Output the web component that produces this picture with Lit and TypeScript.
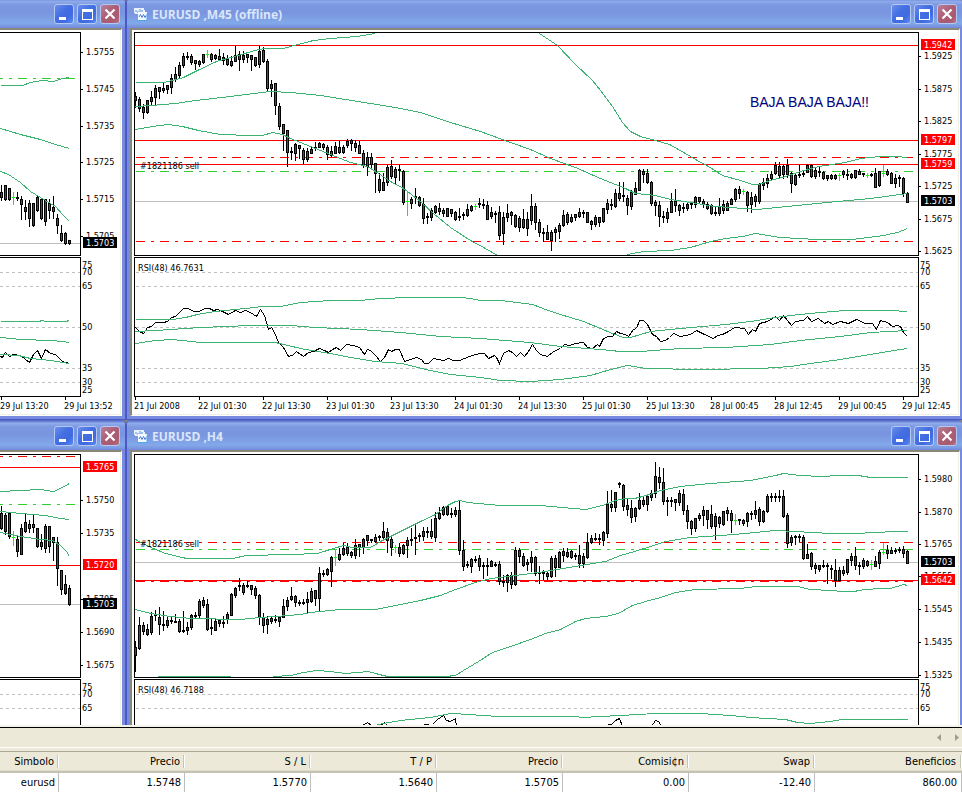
import { LitElement, html, svg, css, nothing } from "lit";
import { customElement, property } from "lit/decorators.js";

type Level = { y: number; kind: "solid" | "dash-red" | "dash-green" | "bid" };
type AxisLabel = { y: number; text: string; tag?: "red" | "black" };
type Note = { text: string; kind: "order" | "comment" };
interface Chart {
  title: string;
  edge: "cut" | "full";
  x: number;
  width: number;
  top: number;
  dashStart: number;
  dashEnd: number;
  candles: string;
  bands: string[];
  levels: Level[];
  prices: AxisLabel[];
  rsiTitle: string;
  rsiBands: string[];
  rsi: string[];
  times: string[];
  notes: Note[];
}

/* Candles: "high bodyTop bodyBottom low" and r(ed) / g(reen); "high middle low l" is a flat lime bar. */
const M45_CANDLES =
  "92 96 100 107 r/97 99 108 111 r/104 107 112 118 r/100 100 112 113 g/91 97 101 105 g/85 88 97 104 g/87 87 91 98 r/83 88 90 92 r/85 85 89 93 g/74 78 87 93 g/" +
  "67 74 79 81 r/62 65 75 77 g/53 56 65 67 g/52 56 58 59/54 56 62 64 r/60 60 63 69 r/60 61 64 66 g/54 54 62 63 g/50 54 57 l/53 54 59 61 r/" +
  "54 55 58 59 g/49 56 59 59 r/53 57 60 64 r/55 59 64 65 r/56 61 65 66 g/46 55 61 61 g/51 54 59 70 r/51 55 59 62 g/54 54 57 62 r/55 55 59 70 r/" +
  "57 57 65 66 r/46 51 64 67 g/47 50 61 62 r/59 61 88 90 r/80 84 88 96 g/83 83 105 114 r/103 106 126 129 r/124 124 133 150 r/130 130 152 166 r/147 151 153 159/" +
  "143 144 153 160 g/145 145 148 158 r/148 150 159 163 r/148 151 159 161 g/147 149 153 153 g/142 147 149 150/142 143 147 147 g/143 144 147 149 r/145 147 154 159 r/146 151 155 156 g/" +
  "142 146 153 153 g/141 147 152 153 r/145 147 152 153 g/139 141 145 147 g/139 140 143 150 r/140 143 147 151 r/141 145 153 153 r/150 153 165 167 r/152 157 166 175 g/153 157 164 167 r/" +
  "163 163 173 192 r/173 179 190 192 r/173 182 190 190 g/165 167 182 185 g/160 166 176 178 r/167 169 177 183 g/165 169 171 180/170 171 202 204 r/191 201 215 l/197 199 203 208 g/" +
  "188 196 198 203/196 197 205 206 r/198 204 218 223 r/213 216 218 223/208 210 217 220 g/205 206 212 213 g/203 208 211 214 r/208 210 213 216 r/208 208 216 216 g/209 209 213 216 r/" +
  "211 212 219 220 r/208 216 218 220/212 214 216 219/204 209 215 216 g/205 206 210 211 g/204 206 209 l/198 203 206 207/199 204 205 208/201 205 219 219 r/207 212 216 218 g/" +
  "211 213 215 222/206 212 235 239 r/212 217 233 244 g/204 213 217 221 g/211 212 215 224 r/214 215 226 227 r/216 218 227 231 g/209 219 227 228 r/212 219 228 235 g/194 206 220 224 g/" +
  "203 206 222 229 r/219 222 232 236 r/228 232 234 241/225 232 239 239 r/230 232 240 250 g/227 229 232 241 g/223 225 231 238 g/210 215 225 226 g/212 214 222 224 r/214 217 221 222 g/" +
  "214 214 217 220 g/208 212 216 217 g/210 212 213 217/212 212 222 222 r/220 221 224 229 r/215 217 224 226 g/217 217 222 226 r/208 208 221 222 g/199 203 209 213 g/199 204 205 209/" +
  "189 193 206 207 g/182 193 198 200 r/182 195 197 201/195 198 205 214 r/190 192 206 209 g/182 188 194 194 g/169 170 190 190 g/169 171 174 182 r/169 173 182 183 r/181 182 203 205 r/" +
  "200 202 205 215 r/201 205 216 226 r/211 216 218 222/208 212 218 222 g/193 201 212 212 g/189 201 205 211 r/204 205 210 215 r/203 207 209 212/203 204 208 210 g/202 203 204 208/" +
  "196 197 204 207 g/197 197 201 202 r/199 201 204 207 r/202 204 208 209 r/204 205 213 214 r/207 212 213 215/198 206 213 215 g/200 204 210 213 r/201 203 210 210 g/198 199 204 204 g/" +
  "188 189 199 201 g/186 189 193 198 r/189 191 194 l/191 192 205 211 r/192 197 204 212 g/194 196 201 206 r/183 184 201 203 g/178 182 185 189 g/174 178 183 187 g/171 174 178 179 g/" +
  "162 165 173 174 g/162 166 175 177 r/165 166 174 178 g/159 165 174 177 r/172 173 183 192 r/173 175 184 185 g/165 174 176 177/171 173 175 176/164 165 172 172 g/164 165 176 177 r/" +
  "167 170 176 178 g/167 171 173 176/171 172 178 179 r/175 175 178 180 g/174 175 178 179 r/174 175 178 179 g/173 175 180 l/170 171 174 177 g/169 174 175 179/173 174 177 178 r/" +
  "170 170 177 178 g/169 171 174 174 r/173 173 175 176/173 175 177 l/173 174 175 176/168 173 187 187 r/171 171 185 186 g/165 173 176 l/169 171 174 175 r/172 173 183 183 r/" +
  "174 178 183 187 g/175 177 179 186/177 178 193 196 r/192 193 202 202 r";

const H4_CANDLES =
  "641 647 655 671 g/617 625 648 649 g/622 625 631 634 r/624 629 634 635 r/612 616 632 634 g/610 614 616 620/607 617 624 634 r/611 624 625 630/617 620 625 627 g/616 620 621 623/" +
  "614 621 622 622/619 621 631 632 r/611 630 631 632/622 627 630 634 g/614 615 627 629 g/612 615 616 617/599 601 615 617 g/597 600 605 607 r/599 604 629 630 r/619 627 629 634/" +
  "619 621 630 630 g/619 620 623 626 g/616 622 623 627/612 614 619 623 g/593 594 615 615 g/587 588 595 597 g/578 585 587 590/583 585 592 594 r/581 585 587 587/585 585 589 594 r/" +
  "586 588 595 598 r/594 595 617 624 r/613 617 625 632 r/616 619 624 633 g/616 618 621 623 g/615 619 621 622/616 617 621 626 g/599 606 617 617 g/597 600 606 610 g/587 596 599 600 r/" +
  "595 596 602 606 r/600 602 603 605/599 602 603 604/592 599 602 613 g/588 591 601 602 g/590 590 598 605 r/567 573 598 611 g/570 573 575 576/568 569 574 575 g/556 557 571 586 g/" +
  "549 557 565 l/548 554 559 560 g/543 548 554 555 g/543 547 553 555 r/551 552 555 557 r/539 545 555 558 g/544 544 547 556 r/538 539 547 553 g/535 535 540 545 g/539 539 541 542/" +
  "534 537 541 542 g/535 536 538 540/522 531 537 540 g/528 532 540 552 r/537 539 547 555 r/545 547 552 l/543 547 553 556 r/544 545 553 554 g/537 540 545 557 g/528 539 540 545/" +
  "525 537 539 554/533 535 537 541/527 531 536 540 g/527 531 532 537/519 531 536 538 r/512 518 537 541 g/507 513 518 519 g/506 507 514 515 g/506 506 514 515 r/508 513 514 517/" +
  "507 510 514 516 g/500 510 550 554 r/540 550 566 570 r/561 564 566 567/558 559 566 572 g/556 559 560 562/555 558 566 570 r/562 565 567 578/558 565 567 575/560 561 566 566 g/" +
  "562 564 565 566/561 564 581 584 r/575 581 582 586/574 575 582 591 g/572 575 584 588 r/547 550 584 585 g/548 550 556 562 r/553 556 565 566 r/559 562 564 570 g/551 557 562 571 g/" +
  "556 557 573 575 r/566 572 573 583/570 572 574 579/572 573 576 579 r/556 558 576 577 g/555 558 567 576 r/551 552 567 567 g/548 551 555 561 r/548 552 556 557 g/550 551 557 558 r/" +
  "553 555 557 559/545 555 563 567 r/553 556 563 567 g/533 542 557 558 g/535 538 542 543 g/533 538 539 540/534 538 540 544/531 532 540 545 g/491 504 533 537 g/490 504 507 511 r/" +
  "492 492 507 511 g/482 483 485 487/484 485 506 510 r/498 505 509 515 r/500 508 517 522 r/507 508 516 521 g/493 500 508 509 g/497 500 504 506 r/495 496 504 510 g/490 493 497 500 g/" +
  "462 476 493 497 g/467 477 482 488 r/468 482 501 504 r/497 500 501 515/497 500 501 506/499 499 502 510 r/490 493 502 505 g/489 494 510 514 r/505 510 521 528 r/520 521 528 534 r/" +
  "518 518 528 531 g/513 515 518 520 g/506 510 515 525 g/510 510 519 528 r/505 514 526 528 r/513 516 526 539 g/516 517 523 527 r/511 511 524 525 g/507 510 513 520 r/510 513 520 532 r/" +
  "514 520 524 l/519 519 521 524/519 520 523 525 r/512 513 521 526 g/511 513 514 519/501 510 514 518 g/507 509 521 525 r/510 511 521 522 g/494 496 511 512 g/493 496 497 501/" +
  "493 496 497 501/490 496 497 501/490 496 516 517 r/513 515 543 547 r/535 537 542 545 g/535 536 537 544/534 536 537 541/535 537 558 559 r/544 554 558 558 g/552 553 566 569 r/" +
  "563 565 568 573 r/565 565 569 571 g/560 565 566 567/563 565 567 583/565 568 570 578/559 570 580 586 r/567 570 580 581 g/566 570 573 575 r/559 559 572 574 g/553 556 560 565 g/" +
  "547 556 565 569 r/562 565 567 574/558 560 566 568 g/560 561 565 566 r/560 564 569 l/556 561 566 566 g/550 552 563 568 g/543 552 554 l/545 550 553 558 r/547 550 553 553 g/" +
  "548 550 552 553/547 549 551 552/546 549 553 557 r/550 551 563 563 r";

const CHARTS: Chart[] = [
  {
    title: "", edge: "cut", x: 0, width: 80, top: 33, dashStart: -6, dashEnd: 75,
    candles:
      "185 192 197 200 r/185 185 199 200 g/188 188 199 200 r/192 197 204 l/192 197 199 200/196 199 204 219 r/200 207 211 219 r/200 203 218 226 r/203 203 225 226 g/" +
      "195 197 210 211 g/199 199 218 219 r/199 199 221 225 g/199 203 210 218 r/196 207 211 218 r/214 218 225 233 r/225 233 240 241 r/232 233 243 244 r/240 240 243 244 r",
    bands: [
      "0,85 22,85 30,82 42,80 53,81 62,78 69,77",
      "0,128 20,134 40,139 55,144 69,148",
      "0,171 8,174 20,182 30,191 45,200 55,206 62,214 69,221",
    ],
    levels: [{ y: 78, kind: "dash-green" }, { y: 243, kind: "bid" }],
    prices: [
      { y: 52, text: "1.5755" }, { y: 89, text: "1.5745" }, { y: 126, text: "1.5735" },
      { y: 162, text: "1.5725" }, { y: 199, text: "1.5715" }, { y: 236, text: "1.5705" },
      { y: 243, text: "1.5703", tag: "black" },
    ],
    rsiTitle: "",
    rsiBands: [
      "0,321 38,321 42,320 45,321 65,321 69,320",
      "0,337 20,339 50,340 62,341 69,342",
      "0,354 18,355 30,358 50,360 69,363",
    ],
    rsi: ["0,356 2,357 5,352 9,356 13,354 20,355 29,362 33,354 37,350 41,358 45,349 50,353 55,354 62,361 69,363"],
    times: ["29 Jul 13:20", "29 Jul 13:52"],
    notes: [],
  },
  {
    title: "EURUSD ,M45 (offline)", edge: "full", x: 135, width: 783, top: 33, dashStart: 136, dashEnd: 913,
    candles: M45_CANDLES,
    bands: [
      "135,82 163,82 172,80 183,77 195,71 216,61 234,56 258,49 266,48 283,48 290,46 313,40 330,38 356,36 375,33",
      "539,33 557,45 575,64 592,80 600,90 612,106 622,122 630,131 640,136 655,140 669,144 685,153 695,159 708,166 722,175 740,180 752,184 758,184 770,180 785,176 800,171 818,166 845,162 860,158 880,156 895,156 907,157",
      "135,106 150,105 175,103 195,100 230,96 270,91 290,92 320,95 345,99 370,103 400,108 420,112 450,122 480,131 510,142 530,149 550,158 575,167 600,178 625,188 635,193 655,195 670,199 690,202 715,206 757,209 797,205 837,201 870,198 907,193",
      "135,129 152,126 168,124 182,126 198,130 220,134 250,135 262,135 272,132 282,134 290,138 310,146 330,154 350,162 367,166 378,173 390,181 403,188 420,201 433,213 450,227 470,240 485,248 497,255",
      "627,254 643,251 670,250 690,247 710,241 725,238 742,236 755,233 780,237 817,239 852,239 883,235 897,232 907,228",
    ],
    levels: [
      { y: 201, kind: "bid" }, { y: 45, kind: "solid" }, { y: 140, kind: "solid" }, { y: 164, kind: "solid" },
      { y: 157, kind: "dash-red" }, { y: 171, kind: "dash-green" }, { y: 241, kind: "dash-red" },
    ],
    prices: [
      { y: 56, text: "1.5925" }, { y: 89, text: "1.5875" }, { y: 121, text: "1.5825" }, { y: 154, text: "1.5775" },
      { y: 186, text: "1.5725" }, { y: 219, text: "1.5675" }, { y: 251, text: "1.5625" },
      { y: 45, text: "1.5942", tag: "red" }, { y: 140, text: "1.5797", tag: "red" },
      { y: 164, text: "1.5759", tag: "red" }, { y: 201, text: "1.5703", tag: "black" },
    ],
    rsiTitle: "RSI(48) 46.7631",
    rsiBands: [
      "135,319 172,319 185,317 197,314 215,311 245,308 262,306 280,306 300,302 330,300 360,300 380,298 410,297 460,297 470,298 480,300 500,300 532,304 545,309 560,314 583,321 600,328 612,333 623,337 630,337 640,334 650,331 680,328 725,324 750,321 775,317 790,315 820,312 845,310 890,310 907,311",
      "135,331 155,330 200,327 250,325 290,325 315,327 360,329 400,332 440,336 480,338 530,342 560,346 600,349 620,351 640,351 680,348 725,347 770,344 800,340 840,336 870,332 907,330",
      "135,343 155,340 172,339 200,342 275,342 283,344 305,349 330,353 350,357 375,361 402,363 425,369 450,374 480,377 500,380 530,381 560,379 590,375 610,369 627,365 645,368 700,369 760,368 790,366 810,363 840,359 870,354 900,349 907,348",
    ],
    rsi: [
      "135,327 139,331 143,333 147,327 151,326 155,322 163,322 167,321 171,317 175,316 179,312 183,308 188,308 193,311 199,311 204,308 209,308 213,310 217,309 222,311 228,314 235,310 240,312 245,310 250,312 256,316 260,309 264,315 268,329 271,327 274,332 278,342 283,347 288,356 292,355 296,351 303,356 308,352 313,351 319,348 324,350 328,352 332,349 336,347 340,350 346,344 353,345 359,347 364,354 367,349 370,350 375,355 380,361 384,357 388,349 391,351 395,349 399,349 404,361 410,359 416,357 421,359 424,363 428,363 433,358 438,359 443,360 448,358 453,360 459,360 464,358 469,356 475,354 480,353 484,353 488,358 494,355 496,357 499,363 503,353 508,350 512,352 516,356 520,352 524,356 528,351 532,344 536,350 540,354 547,356 553,351 560,348 564,344 569,345 575,343 583,342 587,347 592,348 597,344 599,346 603,338 608,336 612,336 616,331 620,333 625,334 628,336 633,329 636,328 639,320 643,320 647,324 652,334 656,336 660,341 665,340 669,337 673,333 680,336 690,334 696,330 704,334 713,338 717,335 722,334 728,331 734,327 744,328 748,334 752,329 755,331 759,323 767,321 775,316 779,320 783,315 791,325 795,321 803,320 807,316 811,321 818,318 824,323 828,321 832,324 840,321 848,323 856,319 865,323 872,323 876,329 880,320 887,322 892,326 897,325 900,326 903,332 907,336",
    ],
    times: [
      "21 Jul 2008", "22 Jul 01:30", "22 Jul 13:30", "23 Jul 01:30", "23 Jul 13:30", "24 Jul 01:30", "24 Jul 13:30",
      "25 Jul 01:30", "25 Jul 13:30", "28 Jul 00:45", "28 Jul 12:45", "29 Jul 00:45", "29 Jul 12:45",
    ],
    notes: [{ text: "#1821186 sell", kind: "order" }, { text: "BAJA BAJA BAJA!!", kind: "comment" }],
  },
  {
    title: "", edge: "cut", x: 0, width: 80, top: 455, dashStart: -6, dashEnd: 75,
    candles:
      "506 513 528 529 r/513 515 531 534 g/513 513 536 538 r/531 537 545 l/536 539 551 556 r/524 528 554 554 g/514 522 531 532 g/520 524 528 532 r/514 524 527 532 r/" +
      "528 528 546 547 r/534 542 546 549 r/524 526 548 552 g/526 526 546 552 r/537 537 542 560 r/537 542 568 585 r/570 570 589 594 r/575 584 593 594 g/585 588 604 605 r",
    bands: [
      "0,491 20,490 40,489 53,491 60,488 69,483",
      "0,511 20,513 45,515 60,518 69,519",
      "0,532 20,536 40,539 52,540 60,545 66,551 69,556",
    ],
    levels: [
      { y: 604, kind: "bid" }, { y: 467, kind: "solid" }, { y: 565, kind: "solid" },
      { y: 456, kind: "dash-red" }, { y: 504, kind: "dash-green" },
    ],
    prices: [
      { y: 500, text: "1.5750" }, { y: 533, text: "1.5735" }, { y: 599, text: "1.5705" },
      { y: 632, text: "1.5690" }, { y: 665, text: "1.5675" },
      { y: 467, text: "1.5765", tag: "red" }, { y: 565, text: "1.5720", tag: "red" },
      { y: 604, text: "1.5703", tag: "black" },
    ],
    rsiTitle: "", rsiBands: [], rsi: [], times: [], notes: [],
  },
  {
    title: "EURUSD ,H4", edge: "full", x: 135, width: 783, top: 455, dashStart: 136, dashEnd: 913,
    candles: H4_CANDLES,
    bands: [
      "135,539 148,546 165,553 186,558 232,558 246,555 290,554 317,553 333,548 343,545 352,547 370,547 382,540 400,531 420,521 435,514 447,505 455,501 460,500 467,502 500,505 540,505 562,507 585,509 602,505 615,500 625,498 634,498 642,496 652,493 660,490 680,486 710,483 750,480 775,475 783,473 800,475 820,476 840,475 858,475 870,477 907,477",
      "135,609 150,613 170,616 190,618 240,619 260,617 275,616 300,614 310,612 340,609 375,609 390,606 420,600 440,595 455,589 475,582 490,578 515,575 545,571 575,566 605,561 620,555 634,551 650,546 665,541 690,537 720,535 745,533 775,530 795,531 830,533 855,533 875,532 895,531 907,531",
      "157,676 230,676",
      "273,676 290,675 303,672 316,670 330,671 345,673 368,671 375,673 387,676 445,676 455,675 463,670 478,661 492,652 510,646 530,639 545,633 560,629 575,621 585,618 605,616 618,613 632,605 645,601 660,597 675,592 695,589 740,588 755,586 797,586 810,589 830,590 842,591 853,591 865,589 880,588 890,588 903,584 907,585",
    ],
    levels: [
      { y: 562, kind: "bid" }, { y: 580, kind: "solid" }, { y: 542, kind: "dash-red" },
      { y: 549, kind: "dash-green" }, { y: 581, kind: "dash-red" },
    ],
    prices: [
      { y: 479, text: "1.5980" }, { y: 512, text: "1.5870" }, { y: 544, text: "1.5765" }, { y: 576, text: "1.5655" },
      { y: 609, text: "1.5545" }, { y: 642, text: "1.5435" }, { y: 675, text: "1.5325" },
      { y: 562, text: "1.5703", tag: "black" }, { y: 580, text: "1.5642", tag: "red" },
    ],
    rsiTitle: "RSI(48) 46.7188",
    rsiBands: [
      "374,725 383,723 400,720 430,717 450,713 470,714 480,715 500,716 575,716 582,717 600,716 620,715 655,713 700,713 730,715 750,717 785,719 797,722 810,723 830,721 842,719 907,719",
    ],
    rsi: [
      "362,725 367,722 371,725", "380,725 384,722 387,725",
      "423,724 428,724 429,726 432,724 437,719 443,715 446,720 450,721 455,718 456,726",
      "607,724 611,724 615,720 619,718 622,726", "651,726 655,720 658,721 661,726",
    ],
    times: [],
    notes: [{ text: "#1821186 sell", kind: "order" }],
  },
];

/* Offsets of the oscillator levels below the top of the price plot. */
const RSI_LABELS: [number, string][] = [
  [232, "75"], [239, "70"], [253, "65"], [294, "50"], [335, "35"], [349, "30"], [357, "25"],
];
const RSI_GRID = [239, 253, 294, 335, 349];
const PLOT_H = 222;
const RSI_TOP = 225;
const RSI_H = 138;

@customElement("chart-window")
class ChartWindow extends LitElement {
  @property({ attribute: false }) chart!: Chart;

  static styles = css`
    :host {
      display: flex;
      flex-direction: column;
      box-sizing: border-box;
      min-width: 0;
      overflow: hidden;
      padding-bottom: 3px;
      background: #768adf;
      border-bottom: 1px solid #4c58c4;
      border-radius: 5px 5px 0 0;
      font-family: "DejaVu Sans Condensed", "DejaVu Sans", "Noto Sans", sans-serif;
      font-size: 9px;
    }
    :host(.cut) { border-right: 1px solid #4c58c4; border-top-left-radius: 0; }
    :host(.full) { border-left: 1px solid #4c58c4; }
    .title-bar {
      display: flex;
      align-items: center;
      gap: 3px;
      height: 30px;
      box-sizing: border-box;
      padding: 2px 5px 0 7px;
      background: linear-gradient(#4f62bd 0, #6f8bdc 2px, #92adec 3px, #7c98e1 7px, #7a95df 15px, #82a9ea 25px, #7c98e1 28px, #7188dc 30px);
    }
    .icon { width: 14px; height: 14px; flex: none; }
    .title {
      flex: 1;
      margin: 0 0 0 1px;
      padding-top: 2px;
      font: 700 12px/18px "Open Sans", "Noto Sans", sans-serif;
      color: #dbe6fa;
      white-space: pre;
      overflow: hidden;
    }
    .cap {
      width: 20px;
      height: 20px;
      padding: 0;
      flex: none;
      border: 1px solid #b4c8f4;
      border-radius: 3px;
      background: linear-gradient(135deg, #6c8eec 0, #4570e2 40%, #3f6ae0 70%, #5b8cf4 100%);
    }
    .cap.close { background: linear-gradient(135deg, #b98099 0, #ab5f76 45%, #a85a70 75%, #b8707c 100%); }
    .cap svg { display: block; width: 18px; height: 18px; }
    .body { padding: 0 3px; }
    .cut .body { padding-left: 0; }
    .full .body { padding-right: 2px; }
    .bevel { background: #fff; border: 2px solid #8b8879; border-right: 1px solid #fff; border-bottom: 1px solid #fff; }
    .cut .bevel { border-left: 0; }
    .client {
      display: grid;
      grid-template-columns: 1fr 39px;
      row-gap: 1px;
      padding: 2px 0 0 2px;
      border-right: 1px solid #f1efe2;
      border-bottom: 1px solid #f1efe2;
      background: #fff;
    }
    .cut .client { padding-left: 0; }
    .pane { position: relative; border: 1px solid #000; min-width: 0; }
    .cut .pane { border-left: 0; }
    .pane svg { display: block; width: 100%; shape-rendering: crispEdges; }
    .price-svg { height: 222px; }
    .rsi-svg { height: 138px; }
    .axis { display: block; width: 39px; overflow: visible; shape-rendering: crispEdges; }
    .axis.price { height: 224px; }
    .axis.osc { height: 140px; }
    .axis text { font-size: 9px; fill: #000; }
    .axis .on-tag { fill: #fff; }
    .order { position: absolute; left: 5px; top: 127px; line-height: 12px; }
    .full .lower .order { top: 83px; }
    .comment {
      position: absolute;
      right: 49px;
      top: 60px;
      font: 14px/18px "Liberation Sans", Arial, sans-serif;
      color: #000080;
    }
    .rsi-title { position: absolute; left: 3px; top: 4px; line-height: 12px; }
    .times {
      grid-column: 1 / -1;
      display: grid;
      height: 17px;
      margin-top: -1px;
      line-height: 18px;
      white-space: nowrap;
    }
    .time { position: relative; min-width: 0; }
    .time::before {
      content: "";
      position: absolute;
      left: 1px;
      top: 0;
      width: 1px;
      height: 3px;
      background: #000;
    }
  `;

  private candles(c: Chart) {
    return c.candles.split("/").map((item, k) => {
      const p = item.split(" ");
      const n = p.map(Number);
      const x = c.edge === "cut" ? 1 + 4 * k : c.x + 4 * k;
      if (p[3] === "l") {
        return svg`<rect x=${x} y=${n[0]} width="1" height=${n[2] - n[0] + 1} fill="#00ff00"></rect>
          <rect x=${x - 1} y=${n[1]} width="3" height="1" fill="#00ff00"></rect>`;
      }
      const colour = p[4];
      const h = colour ? n[2] - n[1] + 1 : 2;
      return svg`<rect x=${x} y=${n[0]} width="1" height=${n[3] - n[0] + 1}></rect>
        <rect x=${x - 1} y=${n[1]} width="3" height=${h}></rect>
        ${colour && h > 2
          ? svg`<rect x=${x} y=${n[1] + 1} width="1" height=${h - 2} fill=${colour === "r" ? "#e01010" : "#107018"}></rect>`
          : nothing}`;
    });
  }

  private level(c: Chart, l: Level) {
    const y = l.y + 0.5;
    const end = c.x + c.width;
    if (l.kind === "solid") return svg`<line x1=${c.x} x2=${end} y1=${y} y2=${y} stroke="#ff0000"></line>`;
    if (l.kind === "bid") return svg`<line x1=${c.x} x2=${end} y1=${y} y2=${y} stroke="#c0c0c0"></line>`;
    return svg`<line x1=${c.dashStart} x2=${c.dashEnd} y1=${y} y2=${y}
      stroke=${l.kind === "dash-red" ? "#ff0000" : "#32cd32"} stroke-dasharray="9 6 3 6"></line>`;
  }

  private curve(points: string, colour: string) {
    return svg`<polyline points=${points} fill="none" stroke=${colour} transform="translate(0.5 0.5)"></polyline>`;
  }

  private priceLabel(l: AxisLabel, solo: boolean) {
    return svg`${l.tag
      ? svg`<rect x="2" y=${l.y - 6} width="34" height="11" fill=${l.tag === "red" ? "#ff0000" : "#000"}></rect>`
      : svg`<rect x="0" y=${l.y} width="2" height="1"></rect>`}
      <text class=${solo ? "on-tag" : ""} x="5" y=${l.y + 3}>${l.text}</text>`;
  }

  render() {
    const c = this.chart;
    const rsiY = c.top + RSI_TOP;
    return html`
      <div class=${c.edge}>
        <div class="title-bar">
          ${c.title
            ? html`<svg class="icon" viewBox="0 -1 14 14" aria-hidden="true">
                <path d="M0 0h10v2h1v3H4v1H1V5H0z" fill="#e9f2ff"></path>
                <path d="M2 2v2M4 3v2M6 1v3M8 2v2" stroke="#5d8fe0" fill="none"></path>
                <rect x="4" y="4" width="9" height="8" fill="#f4f9ff"></rect>
                <path d="M3.5 12.5h9.500v-7" stroke="#49a7ee" fill="none"></path>
                <path d="M5 9l1.500-2.500L8 9.500l1.500-3L11 9.500l1-2" stroke="#4a7bdc" fill="none"></path>
              </svg>`
            : nothing}
          <h2 class="title">${c.title}</h2>
          <button class="cap" aria-label="Minimizar">
            <svg viewBox="0 0 18 18"><rect x="4" y="12" width="7" height="3" fill="#fff"></rect></svg>
          </button>
          <button class="cap" aria-label="Maximizar">
            <svg viewBox="0 0 18 18"><path d="M4 4h11v11H4zM5 7v7h9V7z" fill="#fff" fill-rule="evenodd"></path></svg>
          </button>
          <button class="cap close" aria-label="Cerrar">
            <svg viewBox="0 0 18 18"><path d="M4.500 4.500l9 9M13.500 4.500l-9 9" stroke="#fff" stroke-width="2.200" fill="none"></path></svg>
          </button>
        </div>
        <div class="body">
          <div class="bevel">
            <div class="client ${c.top > 400 ? "lower" : ""}">
              <div class="pane">
                <svg class="price-svg" viewBox="${c.x} ${c.top} ${c.width} ${PLOT_H}" preserveAspectRatio="none"
                  role="img" aria-label="${c.title} precio">
                  ${c.levels.map((l) => this.level(c, l))}
                  ${this.candles(c)}
                  ${c.bands.map((b) => this.curve(b, "#3cb371"))}
                </svg>
                ${c.notes.map((n) => html`<span class=${n.kind}>${n.text}</span>`)}
              </div>
              <svg class="axis price" viewBox="0 ${c.top - 1} 39 224">
                ${c.prices.map((l) => this.priceLabel(l, !!l.tag))}
              </svg>
              <div class="pane">
                <svg class="rsi-svg" viewBox="${c.x} ${rsiY} ${c.width} ${RSI_H}" preserveAspectRatio="none"
                  role="img" aria-label="${c.title} RSI">
                  ${RSI_GRID.map((g) => svg`<line x1=${c.edge === "cut" ? 0 : c.x + 1} x2=${c.x + c.width}
                    y1=${c.top + g + 0.5} y2=${c.top + g + 0.5} stroke="#c0c0c0" stroke-dasharray="3 3"></line>`)}
                  ${c.rsi.map((p) => this.curve(p, "#000"))}
                  ${c.rsiBands.map((p) => this.curve(p, "#3cb371"))}
                </svg>
                ${c.rsiTitle ? html`<span class="rsi-title">${c.rsiTitle}</span>` : nothing}
              </div>
              <svg class="axis osc" viewBox="0 ${rsiY - 1} 39 140">
                ${RSI_LABELS.map(([y, t]) => svg`<text x="1" y=${c.top + y + 3}>${t}</text>`)}
              </svg>
              <div class="times" style="grid-template-columns: repeat(${Math.max(1, c.times.length - 1)}, 1fr) 56px">
                ${c.times.map((t) => html`<span class="time">${t}</span>`)}
              </div>
            </div>
          </div>
        </div>
      </div>
    `;
  }
}

@customElement("trade-terminal")
class TradeTerminal extends LitElement {
  static styles = css`
    :host {
      display: block;
      background: #ece9d8;
      border-top: 2px solid #f5f3e9;
      font: 11px/18px "DejaVu Sans Condensed", "DejaVu Sans", "Noto Sans", sans-serif;
      color: #000;
    }
    .strip {
      display: flex;
      justify-content: flex-end;
      align-items: center;
      gap: 8px;
      height: 19px;
      padding-right: 1px;
      border-top: 1px solid #000;
      border-bottom: 1px solid #fff;
    }
    .arrow { border: 0; padding: 0; background: none; width: 9px; height: 11px; }
    .arrow svg { display: block; width: 9px; height: 11px; }
    table {
      width: 100%;
      margin-top: 3px;
      border-top: 1px solid #aca899;
      border-collapse: separate;
      border-spacing: 0;
      table-layout: fixed;
    }
    .symbol { width: 59px; }
    .amount { width: 126px; }
    th {
      position: relative;
      height: 19px;
      padding: 0 5px 0 0;
      font-weight: 400;
      text-align: right;
      white-space: nowrap;
      border-bottom: 2px solid #c6c3b5;
      box-shadow: inset 0 -1px #dedbcb;
    }
    th::after {
      content: "";
      position: absolute;
      right: 0;
      top: 3px;
      width: 1px;
      height: 13px;
      background: #c7c5b2;
      border-right: 1px solid #fff;
    }
    td {
      height: 19px;
      padding: 0 3px 0 0;
      text-align: right;
      background: #fff;
      border-right: 1px solid #c0c0c0;
    }
    td:last-child { padding-right: 4px; }
    th:last-child { padding-right: 6px; }
  `;

  private heads = ["Simbolo", "Precio", "S / L", "T / P", "Precio", "Comisi¢n", "Swap", "Beneficios"];
  private rows = [["eurusd", "1.5748", "1.5770", "1.5640", "1.5705", "0.00", "-12.40", "860.00"]];

  render() {
    return html`
      <div class="strip">
        <button class="arrow" aria-label="Anterior">
          <svg viewBox="0 0 9 11"><path d="M6 2v7L2 5.500z" fill="#a09d90"></path></svg>
        </button>
        <button class="arrow" aria-label="Siguiente">
          <svg viewBox="0 0 9 11"><path d="M3 2v7l4-3.500z" fill="#a09d90"></path></svg>
        </button>
      </div>
      <table>
        <colgroup>
          <col class="symbol" />
          ${this.heads.slice(1, -1).map(() => html`<col class="amount" />`)}
          <col />
        </colgroup>
        <thead><tr>${this.heads.map((h) => html`<th scope="col">${h}</th>`)}</tr></thead>
        <tbody>${this.rows.map((r) => html`<tr>${r.map((v) => html`<td>${v}</td>`)}</tr>`)}</tbody>
      </table>
    `;
  }
}

@customElement("app-root")
class AppRoot extends LitElement {
  static styles = css`
    :host {
      display: grid;
      grid-template-rows: minmax(0, 1fr) auto;
      height: 100vh;
      overflow: hidden;
      background: #808080;
    }
    .workspace { overflow: hidden; min-height: 0; }
    .windows {
      display: grid;
      grid-template-columns: 126px minmax(0, 1fr);
      margin-top: -2px;
    }
  `;

  render() {
    return html`
      <main class="workspace">
        <div class="windows">
          ${CHARTS.map((c) => html`<chart-window class=${c.edge} .chart=${c}></chart-window>`)}
        </div>
      </main>
      <trade-terminal></trade-terminal>
    `;
  }
}
